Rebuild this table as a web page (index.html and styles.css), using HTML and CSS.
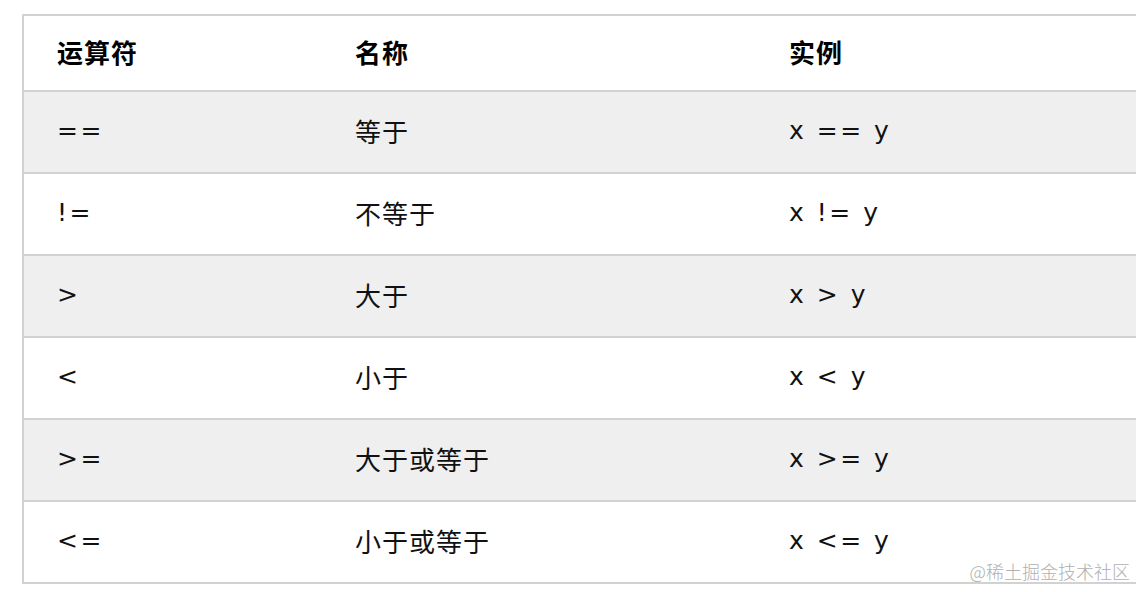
FILE: index.html
```html
<!DOCTYPE html>
<html lang="zh-CN">
<head>
<meta charset="utf-8">
<title>运算符</title>
<link rel="stylesheet" href="styles.css">
</head>
<body>
<div class="page">
  <table class="ops">
    <thead>
      <tr><th class="c1">运算符</th><th class="c2">名称</th><th class="c3">实例</th></tr>
    </thead>
    <tbody>
      <tr class="alt"><td class="op">==</td><td>等于</td><td class="op">x == y</td></tr>
      <tr><td class="op">!=</td><td>不等于</td><td class="op">x != y</td></tr>
      <tr class="alt"><td class="op">&gt;</td><td>大于</td><td class="op">x &gt; y</td></tr>
      <tr><td class="op">&lt;</td><td>小于</td><td class="op">x &lt; y</td></tr>
      <tr class="alt"><td class="op">&gt;=</td><td>大于或等于</td><td class="op">x &gt;= y</td></tr>
      <tr><td class="op">&lt;=</td><td>小于或等于</td><td class="op">x &lt;= y</td></tr>
    </tbody>
  </table>
  <div class="watermark">@稀土掘金技术社区</div>
</div>
</body>
</html>
```
FILE: styles.css
```css
html, body {
  margin: 0;
  padding: 0;
  background: #fff;
  overflow: hidden;
}
.page {
  position: relative;
  width: 1136px;
  height: 592px;
  padding: 14px 0 0 22px;
  box-sizing: border-box;
  overflow: hidden;
}
.ops {
  border-collapse: collapse;
  width: 1200px;
  border-top: 2px solid #d2d2d2;
  border-left: 2px solid #d2d2d2;
  font-family: "Noto Sans CJK SC", sans-serif;
  font-size: 26px;
  line-height: 30px;
  letter-spacing: 1px;
  color: #111;
  table-layout: fixed;
}
.ops th, .ops td {
  text-align: left;
  vertical-align: middle;
  padding: 0 33px 3px 33px;
  border-bottom: 2px solid #d2d2d2;
}
.ops thead tr { height: 76px; }
.ops tbody tr { height: 82px; }
.ops th {
  font-weight: bold;
  color: #000;
}
.ops .c1 { width: 232px; }
.ops .c2 { width: 368px; }
.ops .c3 { width: auto; }
.ops tr.alt td {
  background: #efefef;
}
.ops td.op {
  font-family: "DejaVu Sans", sans-serif;
  font-size: 25px;
  letter-spacing: 2.5px;
}
.watermark {
  position: absolute;
  right: 6px;
  bottom: 8px;
  font-family: "Noto Sans CJK SC", sans-serif;
  font-weight: 300;
  font-size: 18px;
  color: #b0b0b0;
}
```
